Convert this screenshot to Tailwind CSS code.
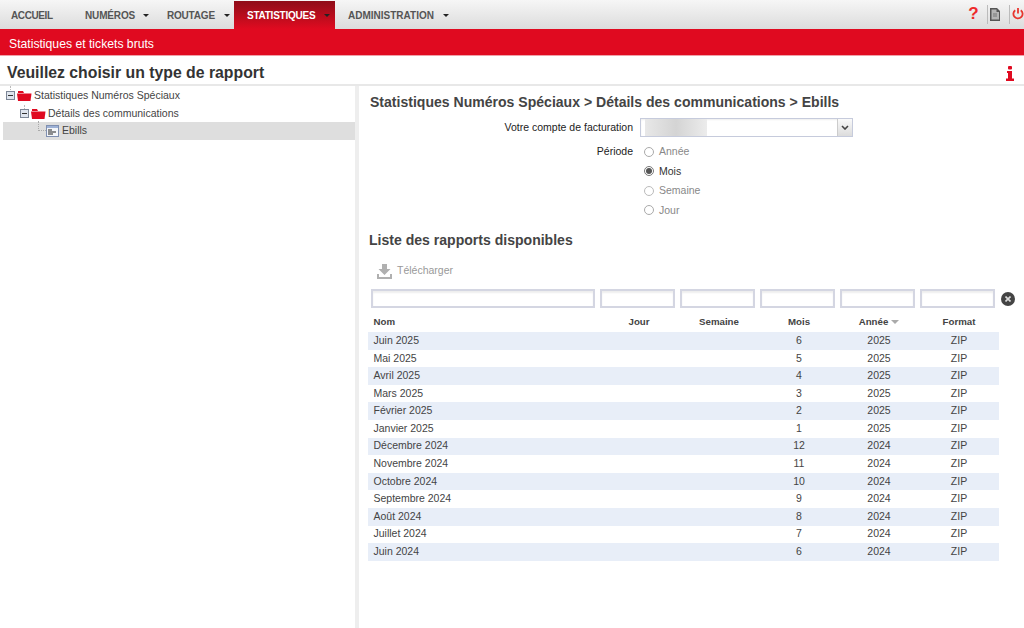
<!DOCTYPE html>
<html lang="fr"><head><meta charset="utf-8"><script src="https://cdn.jsdelivr.net/npm/@tailwindcss/browser@4"></script></head>
<body class="bg-white overflow-hidden font-['Liberation_Sans',Arial,sans-serif] text-[#444]">
<div class="w-[1024px] h-[628px] flex flex-col overflow-hidden">
<nav class="h-[29px] shrink-0 flex items-stretch bg-gradient-to-b from-[#f6f6f6] to-[#dcdcdc] text-[10px] font-bold text-[#555]">
 <a class="w-[72px] pl-[11px] pt-[10px] leading-[12px] tracking-[-0.4px]">ACCUEIL</a>
 <a class="w-[82px] pl-[13px] pt-[10px] leading-[12px] flex gap-[8px] tracking-[-0.15px]"><span>NUMÉROS</span><i class="mt-[4px] w-0 h-0 border-x-[3px] border-x-transparent border-t-[3px] border-t-[#222]"></i></a>
 <a class="w-[80px] pl-[13px] pt-[10px] leading-[12px] flex gap-[9px] tracking-[-0.2px]"><span>ROUTAGE</span><i class="mt-[4px] w-0 h-0 border-x-[3px] border-x-transparent border-t-[3px] border-t-[#222]"></i></a>
 <a class="w-[101px] mt-[1px] pl-[13px] pt-[9px] leading-[12px] flex gap-[9px] tracking-[-0.25px] text-white bg-gradient-to-b from-[#8f0c18] to-[#e00a20]"><span>STATISTIQUES</span><i class="mt-[4px] w-0 h-0 border-x-[3px] border-x-transparent border-t-[3px] border-t-[#222]"></i></a>
 <a class="pl-[13px] pt-[10px] leading-[12px] flex gap-[9px]"><span>ADMINISTRATION</span><i class="mt-[4px] w-0 h-0 border-x-[3px] border-x-transparent border-t-[3px] border-t-[#222]"></i></a>
 <div class="ml-auto flex items-start pt-[5px]">
  <span class="w-[21px] pr-[6px] text-center text-[17px] leading-[18px] font-bold text-[#ee2b2b]">?</span>
  <span class="w-[22px] h-[19px] border-l border-[#bbb] pl-[1px]"><svg width="12" height="13" viewBox="0 0 12 13" class="mt-[3px]"><path d="M1 0h7l3 3v10H1z" fill="#555"/><path d="M2.500 1.500h5v2.500h2.500v7.500h-7.500z" fill="#b4b4b4"/><path d="M4 6h4M4 8h4" stroke="#777"/></svg></span>
  <span class="w-[15px] h-[19px] border-l border-[#bbb] pl-[2px]"><svg width="12" height="13" viewBox="0 0 12 13" class="mt-[2px]" fill="none" stroke="#e8362f" stroke-width="1.8"><path d="M3.200 3.200a4.600 4.600 0 1 0 5.600 0"/><path d="M6 1v5.500"/></svg></span>
 </div>
</nav>
<div class="h-[27px] shrink-0 bg-[#e00a20] text-white text-[12.2px] leading-[30px] pl-[9px] border-b border-[#f0a0a8]">Statistiques et tickets bruts</div>
<header class="h-[30px] shrink-0 flex justify-between items-start pl-[7px] pr-[10px] border-b-2 border-[#e8e8e8]">
 <h1 class="text-[15.8px] font-bold leading-[34px] text-[#333]">Veuillez choisir un type de rapport</h1>
 <svg width="8" height="15" viewBox="0 0 8 15" class="mt-[10px]" fill="#e00a20"><rect x="2" y="0" width="4" height="3.500" rx="1"/><path d="M1 5h5v7.500h2V15H0v-2.500h2V7H1z"/></svg>
</header>
<div class="flex-1 flex min-h-0">
 <aside class="w-[359px] shrink-0 border-r-4 border-[#eee] pl-[3px] pt-[1px] text-[10.5px] text-[#444]">
  <div class="relative h-[17.6px] flex items-center pl-[3px]"><span class="absolute left-[7px] top-[-1px] h-[4px] border-l border-dotted border-[#bbb]"></span><svg width="9" height="9" viewBox="0 0 9 9"><rect x=".5" y=".5" width="8" height="8" fill="#dfe5ee" stroke="#7c8696"/><path d="M2 4.500h5" stroke="#333"/></svg><svg width="15" height="11" viewBox="0 0 15 11" class="ml-[2px] mr-[2px]" fill="#e00a20"><path d="M1 3V1h5l1 2z"/><path d="M0 3.500h14.500l-1 7.500H1z"/></svg><span>Statistiques Numéros Spéciaux</span></div>
  <div class="relative h-[17.6px] flex items-center pl-[17px]"><span class="absolute left-[21px] top-0 h-[4px] border-l border-dotted border-[#bbb]"></span><svg width="9" height="9" viewBox="0 0 9 9"><rect x=".5" y=".5" width="8" height="8" fill="#dfe5ee" stroke="#7c8696"/><path d="M2 4.500h5" stroke="#333"/></svg><svg width="15" height="11" viewBox="0 0 15 11" class="ml-[2px] mr-[2px]" fill="#e00a20"><path d="M1 3V1h5l1 2z"/><path d="M0 3.500h14.500l-1 7.500H1z"/></svg><span>Détails des communications</span></div>
  <div class="relative h-[17.6px] flex items-center pl-[43px] bg-[#dedede]"><span class="absolute left-[35px] top-[-1px] w-[8px] h-[10px] border-l border-b border-dotted border-[#aaa]"></span><svg width="13" height="12" viewBox="0 0 13 12" class="mr-[3px]"><rect x=".5" y=".5" width="12" height="11" fill="#f4f6fa" stroke="#7f8fb0"/><rect x="1" y="1" width="11" height="2" fill="#9db1d6"/><path d="M2 5h4M2 7h8M2 9h5" stroke="#222"/></svg><span>Ebills</span></div>
 </aside>
 <main class="flex-1 min-w-0 pl-[9px] pt-[8px] text-[10.5px]">
  <h2 class="ml-[2px] text-[14.05px] font-bold leading-[17px] text-[#444]">Statistiques Numéros Spéciaux &gt; Détails des communications &gt; Ebills</h2>
  <div class="mt-[7px] flex items-center h-[19px]">
   <label class="w-[265px] text-right text-[#222]">Votre compte de facturation</label>
   <div class="ml-[7px] w-[213px] h-[19px] border border-[#c6cbdc] bg-white flex items-stretch justify-between shadow-[inset_0_1px_2px_#eee]">
    <div class="ml-[4px] w-[62px] bg-gradient-to-r from-[#e8e8e8] via-[#d4d4d4] to-[#ececec]"></div>
    <div class="w-[15px] bg-gradient-to-b from-[#fafafa] to-[#dcdcdc] border-l border-[#ccc] flex items-center justify-center"><svg width="8" height="5" viewBox="0 0 8 5" fill="none" stroke="#444" stroke-width="1.600"><path d="M1 1l3 3 3-3"/></svg></div>
   </div>
  </div>
  <div class="mt-[5px] flex">
   <label class="w-[265px] text-right text-[#222] leading-[19.5px]">Période</label>
   <div class="ml-[11px] flex flex-col text-[#888] leading-[19.5px]">
    <div class="flex items-center gap-[5px]"><span class="size-[10px] rounded-full border border-[#aaa] bg-white"></span>Année</div>
    <div class="flex items-center gap-[5px] text-[#333]"><span class="size-[10px] rounded-full border border-[#777] bg-white flex items-center justify-center"><span class="size-[6px] rounded-full bg-[#555]"></span></span>Mois</div>
    <div class="flex items-center gap-[5px]"><span class="size-[10px] rounded-full border border-[#bbb] bg-white"></span>Semaine</div>
    <div class="flex items-center gap-[5px]"><span class="size-[10px] rounded-full border border-[#aaa] bg-white"></span>Jour</div>
   </div>
  </div>
  <h2 class="mt-[12px] ml-[1px] text-[14.05px] font-bold leading-[17px] text-[#444]">Liste des rapports disponibles</h2>
  <div class="mt-[13px] ml-[9px] h-[18px] flex items-center gap-[5px] text-[#999]"><svg width="15" height="15" viewBox="0 0 15 15" fill="#b0b0b0"><path d="M5 0h5v5h3.500L7.500 11 1.500 5H5z"/><path d="M0 10h2v3h11v-3h2v5H0z"/></svg>Télécharger</div>
  <div class="mt-[9px] flex items-center h-[19px] pl-[3px] gap-[5px]">
   <input class="w-[224px] h-[19px] border-2 border-[#d4d6e2] bg-white shadow-[inset_0_2px_2px_#eee]"><input class="w-[75px] h-[19px] border-2 border-[#d4d6e2] bg-white shadow-[inset_0_2px_2px_#eee]"><input class="w-[75px] h-[19px] border-2 border-[#d4d6e2] bg-white shadow-[inset_0_2px_2px_#eee]"><input class="w-[75px] h-[19px] border-2 border-[#d4d6e2] bg-white shadow-[inset_0_2px_2px_#eee]"><input class="w-[75px] h-[19px] border-2 border-[#d4d6e2] bg-white shadow-[inset_0_2px_2px_#eee]"><input class="w-[75px] h-[19px] border-2 border-[#d4d6e2] bg-white shadow-[inset_0_2px_2px_#eee]">
   <span class="ml-[1px] size-[14px] rounded-full bg-[#444] flex items-center justify-center"><svg width="6" height="6" viewBox="0 0 6 6" stroke="#ddd" stroke-width="1.600"><path d="M.5.500l5 5M5.500.5l-5 5"/></svg></span>
  </div>
  <div class="w-[631px] mt-[5px] text-center text-[#444]">
   <div class="grid grid-cols-[231px_repeat(5,80px)] h-[19px] items-center font-bold text-[9.7px] text-[#444]"><div class="text-left pl-[5.5px]">Nom</div><div>Jour</div><div>Semaine</div><div>Mois</div><div class="flex justify-center items-center gap-[3px]">Année<i class="w-0 h-0 border-x-[4px] border-x-transparent border-t-[4px] border-t-[#aaa]"></i></div><div>Format</div></div>
   <div class="grid grid-cols-[231px_repeat(5,80px)] h-[17.6px] items-center bg-[#e8eef8]"><div class="text-left pl-[5.5px]">Juin 2025</div><div></div><div></div><div>6</div><div>2025</div><div>ZIP</div></div>
   <div class="grid grid-cols-[231px_repeat(5,80px)] h-[17.6px] items-center"><div class="text-left pl-[5.5px]">Mai 2025</div><div></div><div></div><div>5</div><div>2025</div><div>ZIP</div></div>
   <div class="grid grid-cols-[231px_repeat(5,80px)] h-[17.6px] items-center bg-[#e8eef8]"><div class="text-left pl-[5.5px]">Avril 2025</div><div></div><div></div><div>4</div><div>2025</div><div>ZIP</div></div>
   <div class="grid grid-cols-[231px_repeat(5,80px)] h-[17.6px] items-center"><div class="text-left pl-[5.5px]">Mars 2025</div><div></div><div></div><div>3</div><div>2025</div><div>ZIP</div></div>
   <div class="grid grid-cols-[231px_repeat(5,80px)] h-[17.6px] items-center bg-[#e8eef8]"><div class="text-left pl-[5.5px]">Février 2025</div><div></div><div></div><div>2</div><div>2025</div><div>ZIP</div></div>
   <div class="grid grid-cols-[231px_repeat(5,80px)] h-[17.6px] items-center"><div class="text-left pl-[5.5px]">Janvier 2025</div><div></div><div></div><div>1</div><div>2025</div><div>ZIP</div></div>
   <div class="grid grid-cols-[231px_repeat(5,80px)] h-[17.6px] items-center bg-[#e8eef8]"><div class="text-left pl-[5.5px]">Décembre 2024</div><div></div><div></div><div>12</div><div>2024</div><div>ZIP</div></div>
   <div class="grid grid-cols-[231px_repeat(5,80px)] h-[17.6px] items-center"><div class="text-left pl-[5.5px]">Novembre 2024</div><div></div><div></div><div>11</div><div>2024</div><div>ZIP</div></div>
   <div class="grid grid-cols-[231px_repeat(5,80px)] h-[17.6px] items-center bg-[#e8eef8]"><div class="text-left pl-[5.5px]">Octobre 2024</div><div></div><div></div><div>10</div><div>2024</div><div>ZIP</div></div>
   <div class="grid grid-cols-[231px_repeat(5,80px)] h-[17.6px] items-center"><div class="text-left pl-[5.5px]">Septembre 2024</div><div></div><div></div><div>9</div><div>2024</div><div>ZIP</div></div>
   <div class="grid grid-cols-[231px_repeat(5,80px)] h-[17.6px] items-center bg-[#e8eef8]"><div class="text-left pl-[5.5px]">Août 2024</div><div></div><div></div><div>8</div><div>2024</div><div>ZIP</div></div>
   <div class="grid grid-cols-[231px_repeat(5,80px)] h-[17.6px] items-center"><div class="text-left pl-[5.5px]">Juillet 2024</div><div></div><div></div><div>7</div><div>2024</div><div>ZIP</div></div>
   <div class="grid grid-cols-[231px_repeat(5,80px)] h-[17.6px] items-center bg-[#e8eef8]"><div class="text-left pl-[5.5px]">Juin 2024</div><div></div><div></div><div>6</div><div>2024</div><div>ZIP</div></div>
  </div>
 </main>
</div>
</div>
</body></html>
